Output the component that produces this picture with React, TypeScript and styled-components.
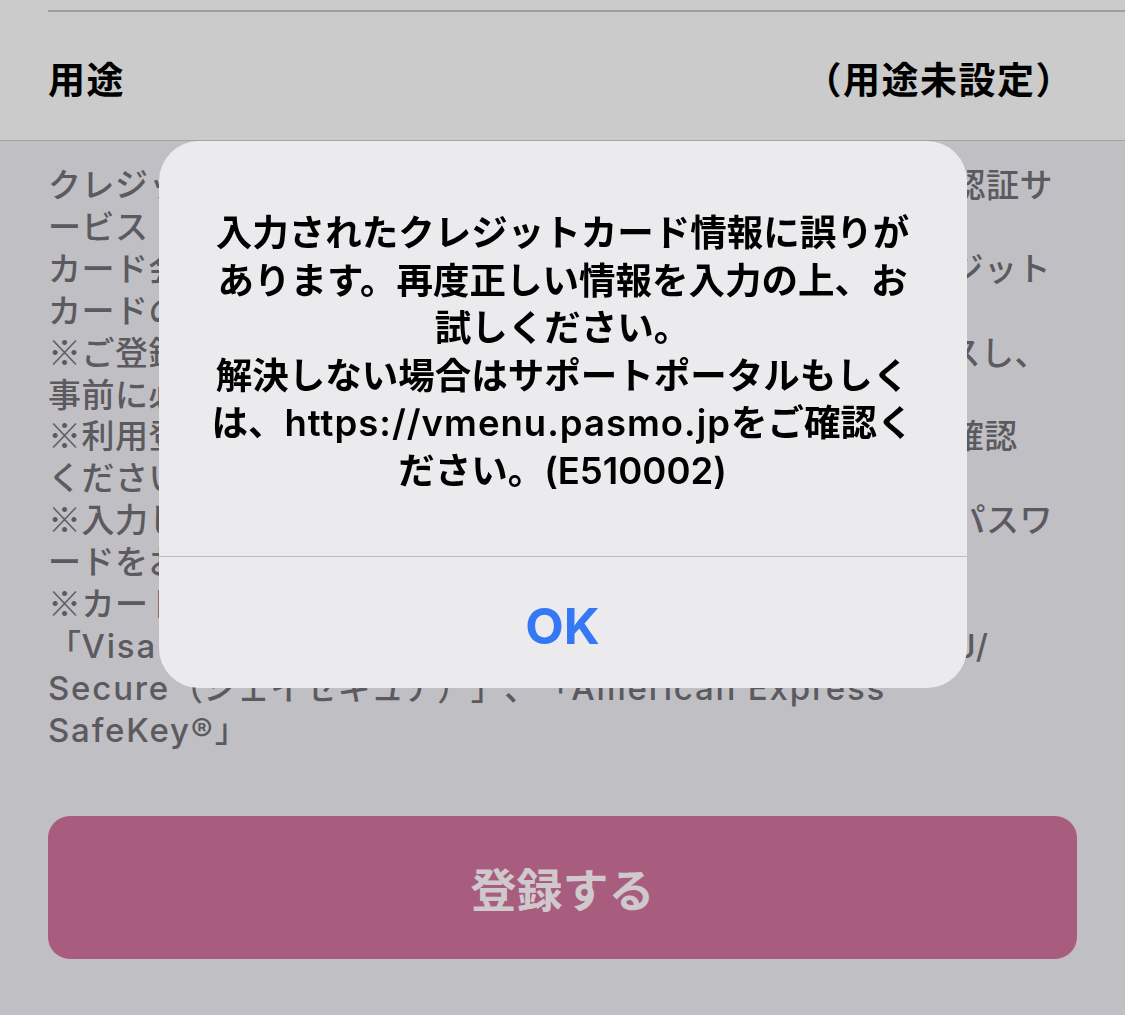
import React from 'react';
import styled, { createGlobalStyle } from 'styled-components';

// --- Global ---
const GlobalStyle = createGlobalStyle`
  html, body {
    margin: 0;
    padding: 0;
    background: #c0bfc4;
  }
  body {
    font-family: "Noto Sans CJK JP", sans-serif;
    text-spacing-trim: space-all;
    -webkit-font-smoothing: antialiased;
  }
`;

// --- Page (dimmed by the alert) ---
const Page = styled.div`
  width: 1125px;
  min-height: 1015px;
  background: #c0bfc4;
  overflow: hidden;
`;

const Header = styled.div`
  background: #cbcbcb;
  border-bottom: 1px solid #a3a3a6;
`;

const TopRule = styled.div`
  height: 10px;
  margin-left: 48px;
  border-bottom: 2px solid #9e9e9e;
`;

const SettingRow = styled.div`
  display: flex;
  justify-content: space-between;
  align-items: center;
  height: 128px;
  padding: 4px 51px 0 48px;
  box-sizing: border-box;
`;

const RowLabel = styled.span`
  font-size: 37px;
  font-weight: 700;
  letter-spacing: 1.5px;
  color: #000;
`;

const Notes = styled.div`
  padding: 22px 48px 0;
  font-size: 33px;
  font-weight: 500;
  letter-spacing: 0.5px;
  line-height: 41.9px;
  color: #5b5a5f;
`;

const NoteLine = styled.span`
  display: block;
  white-space: nowrap;
`;

// Latin words in the notes are set in a wider face than the kana
const Latin = styled.span`
  font-family: "Inter", sans-serif;
  letter-spacing: 1.8px;
  line-height: 1;
`;

const SubmitButton = styled.button`
  display: flex;
  align-items: center;
  justify-content: center;
  width: calc(100% - 96px);
  height: 143px;
  margin: 66px 48px 0;
  border: none;
  border-radius: 22px;
  background: #a85c7e;
  color: #cfc9cc;
  font-family: inherit;
  font-size: 46px;
  font-weight: 600;
`;

// --- Alert ---
const Overlay = styled.div`
  position: fixed;
  inset: 0;
  display: flex;
  justify-content: center;
  align-items: flex-start;
  padding-top: 141px;
`;

const AlertBox = styled.div`
  width: 808px;
  border-radius: 40px;
  background: #ebebed;
  overflow: hidden;
`;

const AlertMessage = styled.p`
  margin: 0;
  padding: 69px 20px 60px;
  font-family: "Inter", "Noto Sans CJK JP", sans-serif;
  font-size: 36.5px;
  font-weight: 600;
  line-height: 47.6px;
  text-align: center;
  white-space: pre-line;
  color: #000;
`;

const Url = styled.span`
  letter-spacing: 1px;
`;

const AlertAction = styled.button`
  display: block;
  width: 100%;
  height: 132px;
  padding-top: 8px;
  border: none;
  border-top: 1.5px solid #bdbdc1;
  background: transparent;
  color: #3478f6;
  font-family: "Inter", sans-serif;
  font-size: 50px;
  font-weight: 700;
`;

const noteLines: React.ReactNode[] = [
  'クレジットカードの登録時には、カード会社が提供する本人認証サ',
  <>ービス（<Latin>3D</Latin>セキュア）による認証を行います。</>,
  'カード会社により認証方法が異なりますので、詳しくはクレジット',
  'カードの発行会社へお問い合わせください。',
  '※ご登録のカード会社によっては、会員専用サイトへアクセスし、',
  '事前に必ず本人認証サービスへの登録を行ってください。',
  '※利用登録の有無については、各クレジットカード会社へご確認',
  'ください。',
  '※入力した情報に誤りがある場合は、ご登録時に設定されたパスワ',
  'ードをお確かめのうえ、再度ご入力ください。',
  '※カード会社の本人認証サービスの名称は以下の通りです。',
  <>
    「<Latin>Visa Secure</Latin>」、「<Latin>Mastercard® SecureCode™</Latin>」、「<Latin>J/</Latin>
  </>,
  <>
    <Latin>Secure</Latin>（ジェイセキュア）」、「<Latin>American Express</Latin>
  </>,
  <>
    <Latin>SafeKey®</Latin>」
  </>,
];

const App: React.FC = () => {
  return (
    <>
      <GlobalStyle />
      <Page>
        <Header>
          <TopRule />
          <SettingRow>
            <RowLabel>用途</RowLabel>
            <RowLabel>（用途未設定）</RowLabel>
          </SettingRow>
        </Header>
        <Notes>
          {noteLines.map((line, i) => (
            <NoteLine key={i}>{line}</NoteLine>
          ))}
        </Notes>
        <SubmitButton>登録する</SubmitButton>
      </Page>
      <Overlay>
        <AlertBox>
          <AlertMessage>
            {'入力されたクレジットカード情報に誤りが\n'}
            {'あります。再度正しい情報を入力の上、お\n'}
            {'試しください。\n'}
            {'解決しない場合はサポートポータルもしく\n'}
            {'は、'}
            <Url>https://vmenu.pasmo.jp</Url>
            {'をご確認く\n'}
            {'ださい。(E510002)'}
          </AlertMessage>
          <AlertAction>OK</AlertAction>
        </AlertBox>
      </Overlay>
    </>
  );
};

export default App;
